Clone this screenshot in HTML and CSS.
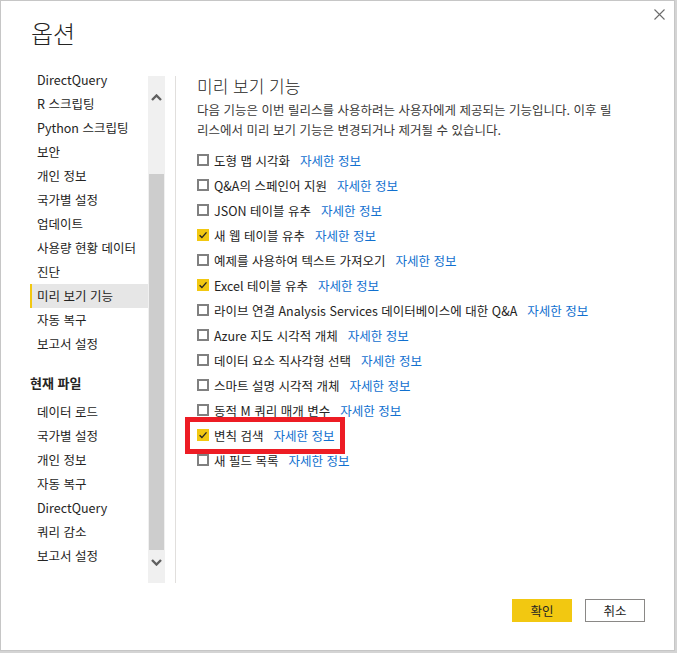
FILE: index.html
```html
<!DOCTYPE html>
<html lang="ko">
<head>
    <meta charset="UTF-8">
    <meta name="viewport" content="width=device-width, initial-scale=1.0">
    <title>옵션</title>
    <link rel="stylesheet" href="styles.css">
</head>
<body>
<div class="dialog">
    <header class="dialog-header">
        <h1>옵션</h1>
        <button class="close" aria-label="닫기">
            <svg width="11" height="11" viewBox="0 0 11 11"><path d="M0.5 0.5L10.5 10.5M10.5 0.5L0.5 10.5" stroke="#6b6b6b" stroke-width="1.1" fill="none"/></svg>
        </button>
    </header>

    <div class="dialog-body">
        <div class="sidebar">
            <div class="nav">
                <ul class="nav-list">
                    <li>DirectQuery</li>
                    <li>R 스크립팅</li>
                    <li>Python 스크립팅</li>
                    <li>보안</li>
                    <li>개인 정보</li>
                    <li>국가별 설정</li>
                    <li>업데이트</li>
                    <li>사용량 현황 데이터</li>
                    <li>진단</li>
                    <li class="active">미리 보기 기능</li>
                    <li>자동 복구</li>
                    <li>보고서 설정</li>
                </ul>
                <div class="nav-section">현재 파일</div>
                <ul class="nav-list">
                    <li>데이터 로드</li>
                    <li>국가별 설정</li>
                    <li>개인 정보</li>
                    <li>자동 복구</li>
                    <li>DirectQuery</li>
                    <li>쿼리 감소</li>
                    <li>보고서 설정</li>
                </ul>
            </div>
            <div class="scrollbar">
                <span class="arrow up">
                    <svg width="11" height="7" viewBox="0 0 11 7"><path d="M1 6L5.5 1.5L10 6" stroke="#5f5f5f" stroke-width="2.4" fill="none"/></svg>
                </span>
                <span class="thumb"></span>
                <span class="arrow down">
                    <svg width="11" height="7" viewBox="0 0 11 7"><path d="M1 1L5.5 5.5L10 1" stroke="#5f5f5f" stroke-width="2.4" fill="none"/></svg>
                </span>
            </div>
        </div>
        <div class="divider"></div>

        <main class="panel">
            <h2>미리 보기 기능</h2>
            <p class="desc">다음 기능은 이번 릴리스를 사용하려는 사용자에게 제공되는 기능입니다. 이후 릴<br>리스에서 미리 보기 기능은 변경되거나 제거될 수 있습니다.</p>
            <ul class="features" id="features"></ul>
        </main>
    </div>

    <footer class="dialog-footer">
        <button class="btn primary">확인</button>
        <button class="btn">취소</button>
    </footer>
</div>

<script>
    // 미리 보기 기능 목록
    const features = [
        { name: '도형 맵 시각화', on: false },
        { name: 'Q&A의 스페인어 지원', on: false },
        { name: 'JSON 테이블 유추', on: false },
        { name: '새 웹 테이블 유추', on: true },
        { name: '예제를 사용하여 텍스트 가져오기', on: false },
        { name: 'Excel 테이블 유추', on: true },
        { name: '라이브 연결 Analysis Services 데이터베이스에 대한 Q&A', on: false },
        { name: 'Azure 지도 시각적 개체', on: false },
        { name: '데이터 요소 직사각형 선택', on: false },
        { name: '스마트 설명 시각적 개체', on: false },
        { name: '동적 M 쿼리 매개 변수', on: false },
        { name: '변칙 검색', on: true, mark: true },
        { name: '새 필드 목록', on: false }
    ];

    const check = '<svg width="12" height="12" viewBox="0 0 12 12"><path d="M2.6 6.3L4.9 8.6L9.5 3.4" stroke="#252423" stroke-width="1.4" fill="none"/></svg>';

    const list = document.getElementById('features');
    features.forEach(f => {
        const row = document.createElement('li');
        row.className = 'feature' + (f.mark ? ' marked' : '');
        row.innerHTML = `
            <span class="checkbox${f.on ? ' checked' : ''}">${f.on ? check : ''}</span>
            <span class="label"></span>
            <a href="#" class="more">자세한 정보</a>
        `;
        row.querySelector('.label').textContent = f.name;
        list.appendChild(row);
    });
</script>
</body>
</html>
```

FILE: styles.css
```css
html, body {
    margin: 0;
    padding: 0;
    background: #fff;
}
body {
    font-family: "Noto Sans CJK KR", "Noto Sans", sans-serif;
    color: #252423;
    width: 677px;
    height: 653px;
}
.dialog {
    box-sizing: border-box;
    width: 675px;
    height: 651px;
    border: 1px solid #c6c6c6;
    box-shadow: 1px 1px 0 1px #d4d4d4;
    background: #fff;
    display: flex;
    flex-direction: column;
}
.dialog-header {
    display: flex;
    justify-content: space-between;
    align-items: flex-start;
    height: 67px;
    padding: 8px 9px 0 30px;
    box-sizing: border-box;
}
.dialog-header h1 {
    margin: 8px 0 0;
    font-size: 24px;
    font-weight: 300;
    line-height: 32px;
    color: #252423;
}
.close {
    background: none;
    border: none;
    padding: 0;
    width: 11px;
    height: 11px;
    display: flex;
    cursor: pointer;
}
.dialog-body {
    display: flex;
    height: 515px;
}
.sidebar {
    display: flex;
    padding-left: 29px;
}
.nav {
    width: 118px;
    font-size: 12.5px;
}
.nav-list {
    list-style: none;
    margin: 0;
    padding: 0;
}
.nav-list li {
    height: 24px;
    line-height: 24px;
    padding-left: 7px;
    white-space: nowrap;
}
.nav-list li.active {
    background: #e6e6e6;
    box-shadow: inset 2px 0 0 #f2c811;
}
.nav-section {
    margin: 15px 0 5px;
    height: 24px;
    line-height: 24px;
    font-weight: bold;
    font-size: 13px;
}
.scrollbar {
    width: 17px;
    height: 507px;
    margin-top: 8px;
    background: #f0f0f0;
    display: flex;
    flex-direction: column;
    align-items: center;
}
.arrow {
    display: flex;
    align-items: center;
    justify-content: center;
}
.arrow.up {
    height: 42px;
}
.thumb {
    width: 15px;
    height: 376px;
    margin-top: 56px;
    background: #cdcdcd;
}
.arrow.down {
    height: 24px;
}
.divider {
    width: 1px;
    height: 507px;
    margin: 8px 0 0 10px;
    background: #e1dfdd;
}
.panel {
    margin-left: 21px;
    flex: 1;
}
.panel h2 {
    margin: 6px 0 0;
    font-size: 17px;
    font-weight: 300;
    line-height: 24px;
    color: #252423;
}
.desc {
    margin: 2px 0 0;
    font-size: 12.5px;
    line-height: 20px;
    color: #3b3a39;
    white-space: nowrap;
}
.features {
    list-style: none;
    margin: 7.5px 0 0;
    padding: 0;
}
.feature {
    display: flex;
    align-items: center;
    height: 25px;
    font-size: 12.5px;
    white-space: nowrap;
    position: relative;
}
.checkbox {
    box-sizing: border-box;
    width: 12px;
    height: 12px;
    border: 2px solid #808080;
    margin-right: 5px;
    display: flex;
    align-items: center;
    justify-content: center;
}
.checkbox.checked {
    border: none;
    background: #f2c811;
}
.more {
    color: #1170cf;
    text-decoration: none;
    margin-left: 10px;
}
.feature.marked::after {
    content: "";
    position: absolute;
    left: -12px;
    top: -6px;
    width: 160px;
    height: 37px;
    box-sizing: border-box;
    border: 5px solid #ed1c24;
}
.dialog-footer {
    display: flex;
    justify-content: flex-end;
    gap: 13px;
    padding: 16px 29px 0 0;
}
.btn {
    box-sizing: border-box;
    width: 60px;
    height: 23px;
    font-family: inherit;
    font-size: 12.5px;
    color: #252423;
    background: #fff;
    border: 1px solid #8a8886;
    padding: 0;
    cursor: pointer;
}
.btn.primary {
    background: #f2c811;
    border-color: #f2c811;
}
```
